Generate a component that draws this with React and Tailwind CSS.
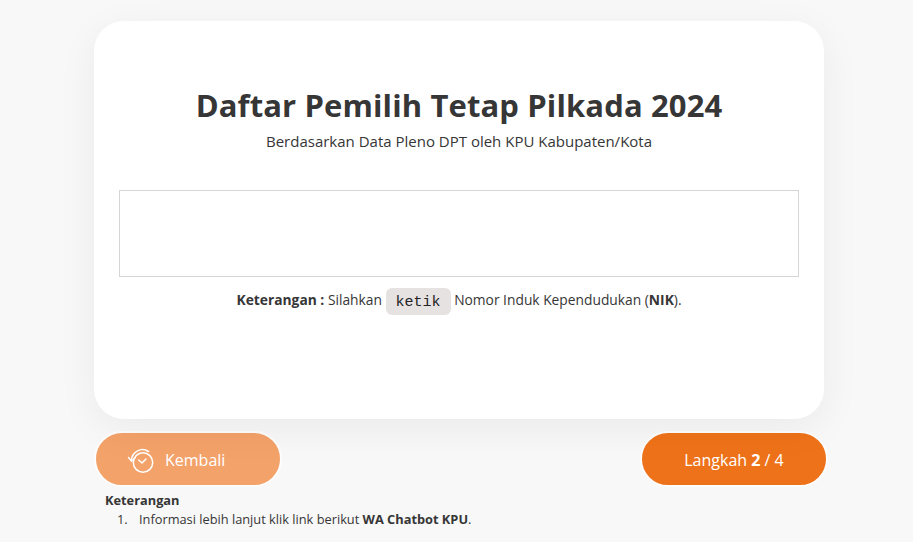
import React from 'react';

function BackClockIcon() {
    return (
        <svg className="mt-[2px]" width="28" height="26" viewBox="0 0 28 26" fill="none" stroke="#fff" strokeWidth="1.5" strokeLinecap="round" strokeLinejoin="round">
            <circle cx="16" cy="14.5" r="9.7" />
            <path d="M11.7 12l3.3 3 4-4" />
            <path d="M4.5 13A11 11 0 0 1 21.5 3.5" />
            <path d="M1.5 9.5l3 3.5 3.5-3" />
        </svg>
    );
}

export default function App() {
    return (
        <div className="min-h-[542px] bg-[#f8f8f8] pl-[94px] pt-[21px] text-[#363636] font-['Open_Sans',sans-serif]">
            <div className="relative z-10 w-[730px] h-[398px] bg-white rounded-[30px] shadow-[0_10px_40px_rgba(0,0,0,0.06)] px-[25px] pt-[64px] text-center">
                <h1 className="text-[31px] leading-[41px] font-bold tracking-[0.12px]">Daftar Pemilih Tetap Pilkada 2024</h1>
                <p className="mt-[3px] text-[15px] leading-[24px]">Berdasarkan Data Pleno DPT oleh KPU Kabupaten/Kota</p>
                <div className="mt-[37px] h-[87px] border border-[#d5d5d5] bg-white"></div>
                <p className="mt-[9px] text-[13.8px] leading-[28px]">
                    <b>Keterangan :</b> Silahkan{' '}
                    <code className="inline-block px-[10px] h-[27px] leading-[29px] align-middle rounded-[6px] bg-[#e6e2e2] text-[#222] text-[15px] font-['Liberation_Mono',monospace]">ketik</code>{' '}
                    Nomor Induk Kependudukan (<b>NIK</b>).
                </p>
            </div>
            <div className="w-[734px] mt-[12px] flex justify-between">
                <button className="w-[188px] h-[56px] pt-[2px] rounded-full border-2 border-[#fdfdfd] bg-[#f3a269] text-white text-[16px] flex items-center pl-[31px] gap-[10px]">
                    <BackClockIcon />
                    <span>Kembali</span>
                </button>
                <button className="w-[188px] h-[56px] pt-[2px] rounded-full border-2 border-[#fdfdfd] bg-[#ee7219] text-white text-[16px]">
                    Langkah <b>2</b> / 4
                </button>
            </div>
            <div className="ml-[11px] mt-[4px] text-[12.8px] leading-[19px]">
                <b>Keterangan</b>
                <div className="flex pl-[12px]">
                    <span className="w-[22px]">1.</span>
                    <span>Informasi lebih lanjut klik link berikut <b>WA Chatbot KPU</b>.</span>
                </div>
            </div>
        </div>
    );
}
